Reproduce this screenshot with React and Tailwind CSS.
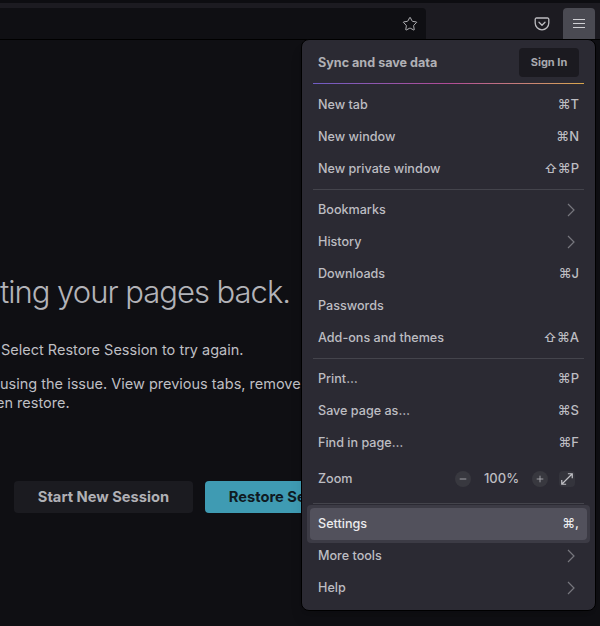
import { Minus, Plus, Star } from "lucide-react";

const Shortcut = ({ children }) => <span className="text-[13px] font-medium">{children}</span>;

const Chevron = () => (
  <svg width="8" height="14" viewBox="0 0 8 14" fill="none" stroke="currentColor" strokeWidth="1.2" className="mr-[4px] text-[#77777e]">
    <path d="M1 1l6 6-6 6" />
  </svg>
);

const MenuRow = ({ label, shortcut, arrow }) => (
  <div className="flex h-8 items-center justify-between px-[11px] text-[#bdbdc2]">
    <span className="text-[12.6px] font-medium">{label}</span>
    {shortcut && <Shortcut>{shortcut}</Shortcut>}
    {arrow && <Chevron />}
  </div>
);

const Divider = () => <div className="mx-[6px] my-1 h-px bg-[#44444c]" />;

const ZoomButton = ({ children }) => (
  <span className="flex h-4 w-4 items-center justify-center rounded-full bg-[#38383f] text-[#b5b5ba]">
    {children}
  </span>
);

const App = () => {
  return (
    <div className="relative h-[626px] w-[600px] overflow-hidden bg-[#0f0f13] font-['Inter',sans-serif]">
      {/* toolbar */}
      <div className="h-[3px] bg-[#0d0d11]" />
      <div className="flex h-[36px] justify-between bg-[#1c1b21] pt-[5px] pr-[5px]">
        <div className="flex h-[31px] w-[426px] items-center justify-end rounded-tr bg-[#0f0f13] pr-[8px]">
          <Star size={16} strokeWidth={1.4} className="text-[#bcbcc0]" />
        </div>
        <div className="flex items-start gap-[13px]">
          <svg width="16" height="16" viewBox="0 0 16 16" fill="none" className="mt-[8px] text-[#bcbcc0]" stroke="currentColor" strokeWidth="1.3">
            <path d="M2.5 2h11A1.3 1.3 0 0 1 14.8 3.3V7A6.8 6.8 0 0 1 1.2 7V3.3A1.3 1.3 0 0 1 2.5 2Z" />
            <path d="M5 6.3 8 9.2l3-2.9" strokeLinecap="round" strokeLinejoin="round" />
          </svg>
          <div className="flex h-[31px] w-[32px] items-center justify-center rounded-t bg-[#4a4a52]">
            <div className="flex w-[12px] flex-col gap-[3px]">
              <div className="h-px bg-[#d0d0d4]" />
              <div className="h-px bg-[#d0d0d4]" />
              <div className="h-px bg-[#d0d0d4]" />
            </div>
          </div>
        </div>
      </div>
      <div className="h-px bg-black" />

      {/* session restore page */}
      <div className="pt-[232px] text-[#bfbfc3]">
        <h1 className="whitespace-nowrap text-[31px] leading-[40px] font-light tracking-[-1px] text-[#b3b3b8]">ting your pages back.</h1>
        <p className="mt-[28px] ml-[1px] whitespace-nowrap text-[14.5px] leading-5">Select Restore Session to try again.</p>
        <p className="mt-[14px] whitespace-nowrap text-[14.5px] leading-[19px]">using the issue. View previous tabs, remove</p>
        <p className="-ml-[4px] whitespace-nowrap text-[14.5px] leading-[19px]">en restore.</p>
        <div className="mt-[69px] ml-[14px] flex gap-3">
          <div className="flex h-8 w-[179px] items-center justify-center rounded bg-[#1b1b20] text-[14.7px] font-bold text-[#b0b0b5]">
            Start New Session
          </div>
          <div className="flex h-8 w-[163px] items-center justify-center rounded bg-[#3f9bb3] text-[14.7px] font-bold whitespace-nowrap text-[#0f1a22]">
            Restore Session
          </div>
        </div>
      </div>

      {/* app menu */}
      <div className="absolute top-[39px] left-[301px] h-[572px] w-[295px] rounded-lg border border-black bg-[#2b2a33] px-[5px] shadow-lg">
        <div className="flex h-[43px] items-center justify-between pt-[2px] pr-[11px] pl-[11px]">
          <span className="mt-[2px] text-[12.6px] font-bold text-[#b0b0b5]">Sync and save data</span>
          <div className="flex h-[29px] w-[60px] items-center justify-center rounded bg-[#1b1a20] text-[11px] font-bold text-[#a9a9ae]">
            Sign In
          </div>
        </div>
        <div className="mx-[6px] h-px bg-gradient-to-r from-[#6f5cc4] via-[#b04a96] to-[#d9a64a]" />
        <div className="pt-[5px]">
          <MenuRow label="New tab" shortcut="⌘T" />
          <MenuRow label="New window" shortcut="⌘N" />
          <MenuRow label="New private window" shortcut="⇧⌘P" />
        </div>
        <Divider />
        <MenuRow label="Bookmarks" arrow />
        <MenuRow label="History" arrow />
        <MenuRow label="Downloads" shortcut="⌘J" />
        <MenuRow label="Passwords" />
        <MenuRow label="Add-ons and themes" shortcut="⇧⌘A" />
        <Divider />
        <MenuRow label="Print…" shortcut="⌘P" />
        <MenuRow label="Save page as…" shortcut="⌘S" />
        <MenuRow label="Find in page…" shortcut="⌘F" />
        <div className="flex h-[40px] items-center justify-between px-[11px] text-[#bdbdc2]">
          <span className="text-[12.6px] font-medium">Zoom</span>
          <div className="flex items-center pr-[4px]">
            <ZoomButton><Minus size={10} /></ZoomButton>
            <span className="w-[61px] text-center text-[13px] font-medium">100%</span>
            <ZoomButton><Plus size={10} /></ZoomButton>
            <span className="ml-[11px] flex h-4 w-4 items-center justify-center rounded-sm bg-[#34343c] text-[#c0c0c5]">
              <svg width="14" height="14" viewBox="0 0 16 16" fill="none" stroke="currentColor" strokeWidth="1.4">
                <path d="M2 14 14 2M9 2h5v5M2 9v5h5" />
              </svg>
            </span>
          </div>
        </div>
        <Divider />
        <div className="-mt-[3px] -mb-[3px] rounded-sm bg-[#3c3b45] p-[3px]">
          <div className="flex h-8 items-center justify-between rounded bg-[#52515c] px-[8px] text-[#ececee]">
            <span className="text-[12.6px] font-medium">Settings</span>
            <Shortcut>⌘,</Shortcut>
          </div>
        </div>
        <MenuRow label="More tools" arrow />
        <MenuRow label="Help" arrow />
      </div>
    </div>
  );
};

export default App;
